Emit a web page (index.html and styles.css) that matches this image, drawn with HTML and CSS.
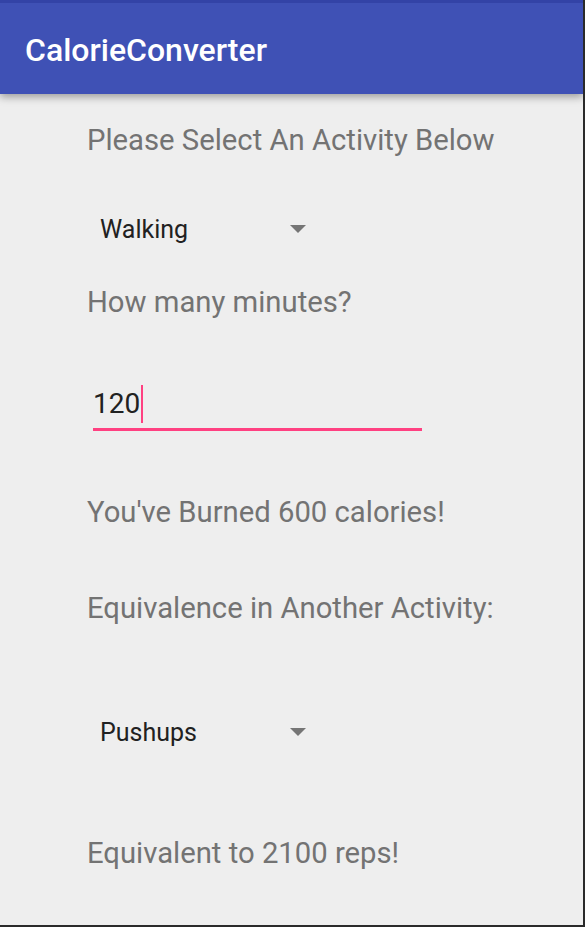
FILE: index.html
```html
<!DOCTYPE html>
<html>
<head>
<meta charset="utf-8">
<link rel="stylesheet" href="styles.css">
</head>
<body>
<div class="screen">
  <header class="appbar">
    <div class="statusbar"></div>
    <h1 class="title">CalorieConverter</h1>
  </header>
  <main class="content">
    <p class="label l1">Please Select An Activity Below</p>
    <div class="spinner s1"><span class="spinner-text">Walking</span><span class="arrow"></span></div>
    <p class="label l2">How many minutes?</p>
    <div class="field"><span class="field-text">120</span><span class="cursor"></span></div>
    <p class="label l3">You've Burned 600 calories!</p>
    <p class="label l4">Equivalence in Another Activity:</p>
    <div class="spinner s2"><span class="spinner-text">Pushups</span><span class="arrow"></span></div>
    <p class="label l5">Equivalent to 2100 reps!</p>
  </main>
</div>
</body>
</html>
```
FILE: styles.css
```css
* { box-sizing: border-box; }
html, body { margin: 0; padding: 0; }
body { font-family: Roboto, "Noto Sans", sans-serif; background: #eeeeee; }
.screen {
  width: 585px;
  height: 927px;
  background: #eeeeee;
  border-right: 2px solid #2a2a2a;
  border-bottom: 2px solid #2a2a2a;
  overflow: hidden;
  display: flex;
  flex-direction: column;
}
.appbar {
  height: 94px;
  flex: none;
  background: #3f51b5;
  box-shadow: 0 3px 8px rgba(0,0,0,0.35);
  position: relative;
  z-index: 1;
}
.statusbar { height: 3px; background: #3343a6; }
.title {
  margin: 0;
  padding-left: 25px;
  padding-top: 28px;
  font-size: 32px;
  font-weight: 500;
  line-height: 38px;
  color: #ffffff;
}
.content { display: flex; flex-direction: column; padding-left: 87px; }
.label {
  margin: 0;
  font-size: 29.25px;
  line-height: 34px;
  height: 34px;
  color: #737373;
  white-space: nowrap;
}
.l1 { margin-top: 29px; }
.l2 { margin-top: 40px; }
.l3 { margin-top: 64px; }
.l4 { margin-top: 62px; }
.l5 { margin-top: 88px; }
.spinner {
  display: flex;
  align-items: center;
  width: 219px;
  height: 30px;
  padding-left: 13px;
}
.s1 { margin-top: 58px; }
.s2 { margin-top: 93px; }
.spinner-text {
  font-size: 25px;
  line-height: 30px;
  color: #212121;
}
.arrow {
  margin-left: auto;
  width: 0;
  height: 0;
  border-left: 8px solid transparent;
  border-right: 8px solid transparent;
  border-top: 8px solid #757575;
  position: relative;
  top: -1px;
}
.field {
  margin-top: 66px;
  margin-left: 6px;
  width: 329px;
  height: 46px;
  display: flex;
  align-items: flex-start;
  border-bottom: 3px solid #ff4081;
}
.field-text {
  font-size: 28px;
  line-height: 38px;
  color: #212121;
}
.cursor {
  width: 2px;
  height: 38px;
  background: #ff4081;
  margin-left: 1px;
}
```
